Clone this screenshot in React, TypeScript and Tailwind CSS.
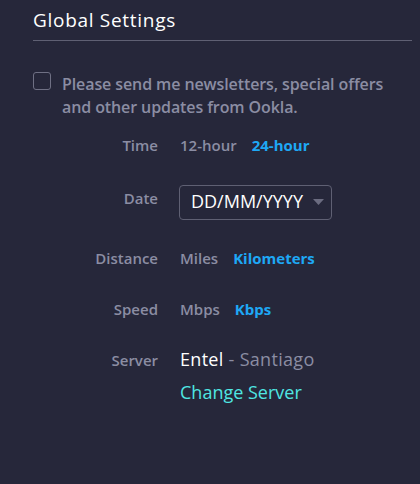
import React from "react";

const labelCls = "w-[125px] shrink-0 text-right text-[15px] leading-[20px] font-semibold text-[#8b8da3]";

export default function App() {
  return (
    <div
      className="w-[420px] h-[484px] bg-[#26273a] overflow-hidden"
      style={{ fontFamily: '"Open Sans", "Liberation Sans", sans-serif' }}
    >
      <div className="pl-[33px] pr-[8px] pt-[8px]">
        <h1 className="text-[19px] leading-[24px] font-medium text-white tracking-[0.7px]">
          Global Settings
        </h1>
        <div className="mt-[8px] h-px bg-[#5f6073]" />

        <div className="mt-[31px] flex items-start">
          <div className="w-[18px] h-[18px] shrink-0 rounded-[3px] border border-[#6f7084]" />
          <p className="ml-[11px] mt-[1px] text-[16px] leading-[23px] font-semibold text-[#8b8da3] tracking-[-0.1px]">
            Please send me newsletters, special offers
            <br />
            and other updates from Ookla.
          </p>
        </div>

        <div className="mt-[16px] flex items-start">
          <div className={labelCls}>Time</div>
          <div className="ml-[22px] flex gap-[15px] text-[15px] leading-[20px]">
            <span className="font-semibold text-[#8b8da3]">12-hour</span>
            <span className="font-bold text-[#1ea8f5]">24-hour</span>
          </div>
        </div>

        <div className="mt-[30px] flex items-start">
          <div className={labelCls + " pt-[3px]"}>Date</div>
          <div className="ml-[21px] w-[153px] h-[35px] rounded-[4px] border border-[#5f6073] flex items-start pt-[3px] pl-[11px] pr-[7px] justify-between">
            <span className="text-[18px] leading-[24px] font-medium text-white">DD/MM/YYYY</span>
            <svg width="11" height="6" viewBox="0 0 11 6" className="mt-[10px]">
              <path d="M0 0 L11 0 L5.5 6 Z" fill="#6b6c80" />
            </svg>
          </div>
        </div>

        <div className="mt-[28px] flex items-start">
          <div className={labelCls}>Distance</div>
          <div className="ml-[22px] flex gap-[15px] text-[15px] leading-[20px]">
            <span className="font-semibold text-[#8b8da3]">Miles</span>
            <span className="font-bold text-[#1ea8f5]">Kilometers</span>
          </div>
        </div>

        <div className="mt-[31px] flex items-start">
          <div className={labelCls}>Speed</div>
          <div className="ml-[22px] flex gap-[15px] text-[15px] leading-[20px]">
            <span className="font-semibold text-[#8b8da3]">Mbps</span>
            <span className="font-bold text-[#1ea8f5]">Kbps</span>
          </div>
        </div>

        <div className="mt-[28px] flex items-baseline">
          <div className={labelCls}>Server</div>
          <div className="ml-[22px] flex flex-col">
            <div className="text-[18px] leading-[24px] font-medium tracking-[0.3px]">
              <span className="text-white">Entel</span>
              <span className="text-[#8b8da3]"> - Santiago</span>
            </div>
            <div className="mt-[9px] text-[18px] leading-[24px] font-medium text-[#4fe6e2]">Change Server</div>
          </div>
        </div>
      </div>
    </div>
  );
}
